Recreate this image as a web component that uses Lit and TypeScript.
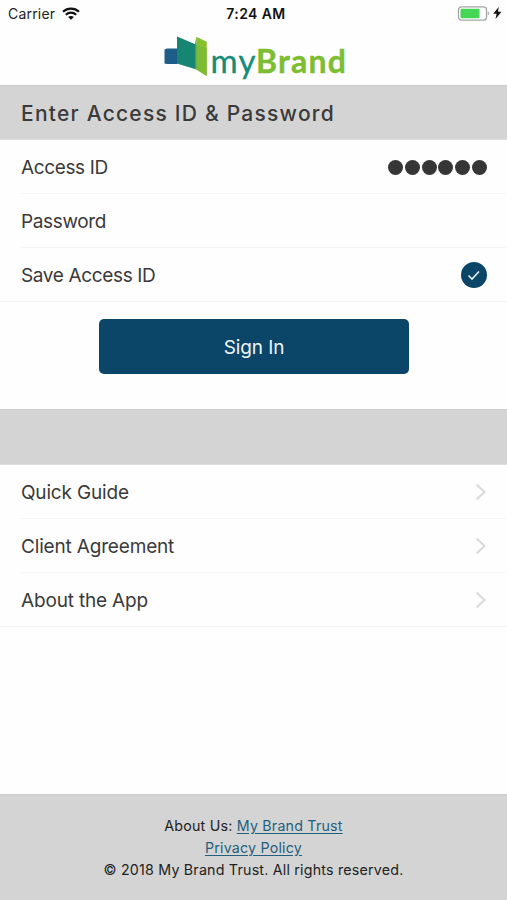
import { LitElement, html, css } from "lit";
import { customElement } from "lit/decorators.js";

@customElement("app-root")
export class AppRoot extends LitElement {
  static styles = css`
    :host {
      display: flex;
      flex-direction: column;
      height: 900px;
      background: #fefefe;
      color: #3a3a3a;
      font-family: Inter, "Liberation Sans", sans-serif;
      overflow: hidden;
    }
    * { box-sizing: border-box; }
    svg { display: block; flex: none; }
    .status {
      display: grid;
      grid-template-columns: 1fr auto 1fr;
      align-items: center;
      height: 28px;
      padding: 0 5px 2px 8px;
      font-size: 14px;
      color: #222;
    }
    .left, .right { display: flex; align-items: center; }
    .left { gap: 7px; }
    .carrier { letter-spacing: 0.2px; }
    .right { justify-content: flex-end; gap: 3px; }
    .time { font-weight: 600; letter-spacing: 0.4px; color: #111; padding-left: 2px; }
    .brand { display: flex; justify-content: center; height: 57px; }
    .wordmark { font-family: Lato, sans-serif; }
    .section {
      height: 55px;
      flex: none;
      background: #d4d4d4;
      border-top: 1px solid #cbcbcb;
      border-bottom: 1px solid #dedede;
      padding: 2px 0 0 21px;
      display: flex;
      align-items: center;
    }
    .title { font-size: 21px; font-weight: 500; letter-spacing: 1.23px; margin: 0; }
    .list { border-bottom: 1px solid #f3f3f3; padding-left: 21px; letter-spacing: -0.36px; }
    .menu { letter-spacing: -0.17px; }
    .row {
      height: 54px;
      display: flex;
      align-items: center;
      justify-content: space-between;
      border-bottom: 1px solid #f5f5f5;
      padding: 2px 20px 0 0;
      font-size: 19px;
    }
    .row:last-child { border-bottom: 0; height: 53px; }
    .menu .row { padding-bottom: 1px; }
    .dots { display: flex; gap: 1.8px; }
    .dot { width: 15px; height: 15px; border-radius: 50%; background: #363636; }
    .check { margin-bottom: 1px; }
    .action { height: 107px; padding: 17px 0 0 1px; display: flex; justify-content: center; align-items: flex-start; }
    .signin {
      width: 310px;
      height: 55px;
      border: 0;
      border-radius: 5px;
      background: #0b4668;
      color: #eef5f9;
      font: 400 19px Inter, sans-serif;
      letter-spacing: -0.1px;
      padding: 2px 0 0;
    }
    .menu-band { height: 56px; }
    .footer {
      margin-top: auto;
      height: 106px;
      background: #d4d4d4;
      border-top: 1px solid #cbcbcb;
      padding-top: 20px;
      text-align: center;
      font-size: 14.25px;
      line-height: 22px;
      letter-spacing: 0.2px;
      color: #222;
    }
    .link { color: #235f7e; text-decoration: underline; text-underline-offset: 2px; }
  `;

  render() {
    return html`
      <div class="status">
        <div class="left">
          <span class="carrier">Carrier</span>
          <svg width="18" height="13" viewBox="0 0 18 13" fill="none" stroke="#111" stroke-width="2.2">
            <path d="M1 4.8C5.5.6 12.5.6 17 4.8M3.8 7.8C6.8 5 11.2 5 14.2 7.8"/>
            <path d="M9 12.8L6.1 10C7.8 8.6 10.2 8.6 11.9 10Z" fill="#111" stroke="none"/>
          </svg>
        </div>
        <span class="time">7:24 AM</span>
        <div class="right">
          <svg width="33" height="15" viewBox="0 0 33 15">
            <rect x="1.5" y=".8" width="28" height="13.4" rx="3" fill="#fff" stroke="#a5a5a5" stroke-width="1.3"/>
            <rect x="3.5" y="2.8" width="19" height="9.4" rx="1" fill="#45d655"/>
            <path d="M30.8 5.3Q33 7.5 30.8 9.7Z" fill="#999"/>
          </svg>
          <svg width="9" height="12" viewBox="0 0 9 12"><path d="M5.7 0L.2 6.800H3.600L2.500 12L8.500 4.800H5Z" fill="#111"/></svg>
        </div>
      </div>
      <div class="brand">
        <svg width="190" height="57" viewBox="160 28 190 57">
          <path d="M165.500 49.500L168 48.500H178.500V64H168L165.500 63.500Z" fill="#1d5d87"/>
          <path d="M197.300 36.700L207.700 41.700V76L197.300 69.500Z" fill="#86c02c"/>
          <path d="M178 36.500L197.500 44.800V69.500L178 63.500Z" fill="#168571"/>
          <path d="M197.300 36.700V69.500L196 69V44Z" fill="#4b9f4d"/>
          <path d="M197.500 46V69.500L207.700 76V48Z" fill="#7dbb30"/>
          <text class="wordmark" x="211.500" y="73" font-size="33" fill="#168b76" stroke="#168b76" stroke-width=".3" textLength="45">my</text>
          <text class="wordmark" x="257" y="72.700" font-size="32" font-weight="700" fill="#7dbd32" stroke="#7dbd32" stroke-width=".4" textLength="90">Brand</text>
        </svg>
      </div>
      <div class="section"><h1 class="title">Enter Access ID &amp; Password</h1></div>
      <div class="list">
        <div class="row"><span>Access ID</span>
          <div class="dots">${[0, 1, 2, 3, 4, 5].map(() => html`<span class="dot"></span>`)}</div>
        </div>
        <div class="row"><span>Password</span></div>
        <div class="row"><span>Save Access ID</span>
          <svg class="check" width="26" height="26" viewBox="0 0 26 26">
            <circle cx="13" cy="13" r="13" fill="#0b4668"/>
            <path d="M7.500 13.500L11 17L18 9.500" fill="none" stroke="#e3eff8" stroke-width="1.600"/>
          </svg>
        </div>
      </div>
      <div class="action"><button class="signin">Sign In</button></div>
      <div class="section menu-band"></div>
      <div class="list menu">
        ${["Quick Guide", "Client Agreement", "About the App"].map(
          (label) => html`<div class="row"><span>${label}</span>
            <svg width="12" height="18" viewBox="0 0 12 18" fill="none" stroke="#dadada" stroke-width="2">
              <path d="M1.500 1.500L9.500 9L1.500 16.500"/>
            </svg></div>`
        )}
      </div>
      <div class="footer">
        <div>About Us: <a class="link">My Brand Trust</a></div>
        <div><a class="link">Privacy Policy</a></div>
        <div>© 2018 My Brand Trust. All rights reserved.</div>
      </div>
    `;
  }
}
